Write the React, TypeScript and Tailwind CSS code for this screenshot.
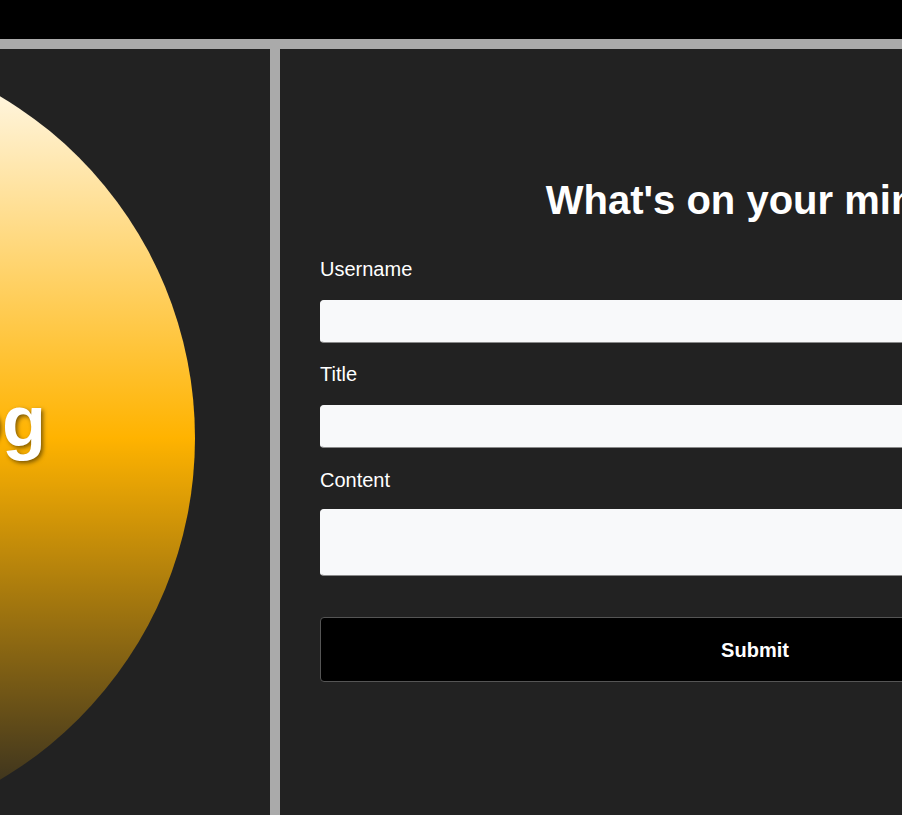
import React from "react";

export default function App() {
  return (
    <div className="h-screen w-full overflow-hidden bg-[#222222] font-['Liberation_Sans',Arial,sans-serif]">
      <div className="w-[1240px]">
        <header className="h-[39px] bg-black" />
        <div className="h-[10px] bg-[#aaaaaa]" />
        <div className="flex h-[780px]">
          <aside className="flex w-[270px] shrink-0 items-start overflow-hidden bg-[#222222]">
            <div className="-ml-[599px] -mt-[8px] flex h-[794px] w-[794px] shrink-0 items-center justify-end rounded-full bg-[linear-gradient(to_bottom,#ffffff,#ffb300,transparent)] pb-[34px] pr-[149px]">
              <span className="whitespace-nowrap text-[72px] font-bold leading-[83px] text-white [text-shadow:2px_2px_4px_rgba(0,0,0,0.5)]">
                Blog
              </span>
            </div>
          </aside>
          <div className="w-[10px] shrink-0 bg-[#aaaaaa]" />
          <main className="w-[950px] shrink-0 px-[40px] pt-[128px]">
            <h1 className="text-center text-[40px] font-bold leading-[46px] text-white">
              What's on your mind?
            </h1>
            <form className="mt-[35px] flex flex-col" onSubmit={(e) => e.preventDefault()}>
              <label className="mb-[19px] text-[20px] leading-[23px] text-white">Username</label>
              <input
                type="text"
                className="mb-[20px] h-[43px] rounded-[4px] border border-[#f8f9fa] border-b-[#8a8a8a] bg-[#f8f9fa] px-3 outline-none"
              />
              <label className="mb-[19px] text-[20px] leading-[23px] text-white">Title</label>
              <input
                type="text"
                className="mb-[21px] h-[43px] rounded-[4px] border border-[#f8f9fa] border-b-[#8a8a8a] bg-[#f8f9fa] px-3 outline-none"
              />
              <label className="mb-[17px] text-[20px] leading-[23px] text-white">Content</label>
              <textarea className="mb-[41px] h-[67px] resize-none rounded-[4px] border border-[#f8f9fa] border-b-[#8a8a8a] bg-[#f8f9fa] px-3 outline-none" />
              <button
                type="submit"
                className="h-[65px] rounded-[4px] border border-[#555555] bg-black text-[20px] font-bold text-white"
              >
                Submit
              </button>
            </form>
          </main>
        </div>
      </div>
    </div>
  );
}
